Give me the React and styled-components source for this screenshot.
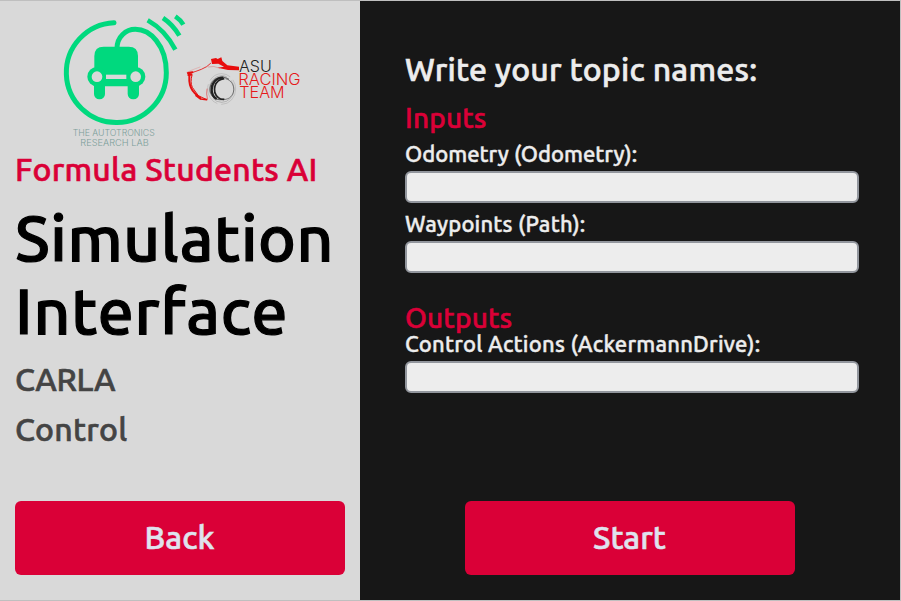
import React from 'react';
import styled, { createGlobalStyle, css } from 'styled-components';

const mediumWeight = css`
  font-weight: 500;
  -webkit-text-stroke: 0.019em currentColor;
`;

const GlobalStyle = createGlobalStyle`
  *, *::before, *::after { box-sizing: border-box; }
  body {
    margin: 0;
    font-family: Ubuntu, 'Noto Sans', sans-serif;
    overflow: hidden;
  }
`;

const Window = styled.div`
  display: grid;
  grid-template-columns: 360px 1fr;
  width: 901px;
  height: 601px;
  border: 1px solid #bfbfbf;
  border-left: 0;
`;

const Sidebar = styled.aside`
  display: flex;
  flex-direction: column;
  padding: 4px 15px 25px;
  background: #d9d9d9;
`;

const Logos = styled.header`
  display: flex;
  align-items: flex-start;
  height: 144px;
  padding-left: 35px;

  svg { display: block; flex: none; }
  svg + svg { margin-top: 40px; }
`;

const Program = styled.p`
  ${mediumWeight}
  margin: 0;
  color: #da0037;
  font-size: 32px;
  line-height: 40px;
  letter-spacing: 0.24px;
  white-space: nowrap;
`;

const Title = styled.h1`
  ${mediumWeight}
  margin: 12px 0 7px;
  color: #000;
  font-size: 64px;
  line-height: 73px;
`;

const TitleLine = styled.span`
  display: block;
  letter-spacing: ${p => p.$spacing}px;
`;

const Mode = styled.p`
  ${mediumWeight}
  margin: 0;
  color: #444;
  font-size: 32px;
  line-height: 50px;
  letter-spacing: ${p => p.$spacing || 0}px;
`;

const Main = styled.main`
  display: flex;
  flex-direction: column;
  padding: 48px 41px 25px 45px;
  background: #171717;
  color: #ededed;
`;

const Heading = styled.h2`
  ${mediumWeight}
  margin: 0 0 16px;
  font-size: 32px;
  line-height: 40px;
  letter-spacing: 0.24px;
`;

const Section = styled.section`
  display: flex;
  flex-direction: column;
  gap: 9px;
  margin-bottom: 32px;
`;

const SectionTitle = styled.h3`
  ${mediumWeight}
  margin: 0 0 ${p => p.$gap}px;
  color: #da0037;
  font-size: 28px;
  line-height: 26px;
  letter-spacing: 0.15px;
`;

const Field = styled.label`
  ${mediumWeight}
  display: flex;
  flex-direction: column;
  gap: 5px;
  font-size: 22px;
  line-height: 24px;
  letter-spacing: ${p => p.$spacing || 0}px;
`;

const Input = styled.input`
  width: 454px;
  height: 32px;
  padding: 0 8px;
  border: 2px solid #92969d;
  border-radius: 6px;
  background: #ededed;
  font: inherit;
  outline: none;
`;

const Button = styled.button`
  width: 330px;
  height: 74px;
  margin: auto 0 0;
  padding: 0 1px 2px 0;
  border: 0;
  border-radius: 6px;
  background: #da0037;
  color: #dfe3ee;
  font: 32px/72px Ubuntu, 'Noto Sans', sans-serif;
  letter-spacing: ${p => p.$spacing || 0}px;
  ${mediumWeight}
`;

const StartButton = styled(Button)`
  margin-left: 60px;
`;

function LabLogo() {
  return (
    <svg width="136" height="144" viewBox="0 0 408 432" fill="none">
      <g stroke="#00d97e" strokeWidth="15">
        <path d="M192 53A150 150 0 1 0 349 203C349 120 300 73 256 73C228 73 201 95 201 130" strokeLinecap="round" />
        <path d="M293 46Q345 75 376 134M339 39Q369 59 388 92M376 34Q391 44 400 59" strokeWidth="14" />
      </g>
      <g fill="#00d97e">
        <path d="M133 195V153Q133 125 161 125H236Q264 125 264 153V195V244H133Z" />
        <circle cx="141" cy="215" r="29" />
        <circle cx="257" cy="215" r="29" />
        <rect x="132" y="225" width="33" height="58" rx="16" />
        <rect x="233" y="225" width="34" height="58" rx="16" />
      </g>
      <g fill="#d9d9d9">
        <circle cx="141" cy="215" r="16" />
        <circle cx="257" cy="215" r="16" />
        <rect x="168" y="209" width="61" height="13" />
      </g>
      <g fill="#7c9e99" fontFamily="Inter, sans-serif" fontWeight="300" fontSize="26">
        <text x="68" y="394" textLength="246" lengthAdjust="spacingAndGlyphs">THE AUTOTRONICS</text>
        <text x="91" y="424" textLength="205" lengthAdjust="spacingAndGlyphs">RESEARCH LAB</text>
      </g>
    </svg>
  );
}

function RacingLogo() {
  return (
    <svg width="124" height="70" viewBox="18 0 372 210" fill="none">
      <g stroke="#e60f0f" strokeLinecap="round" strokeLinejoin="round">
        <path d="M92 55Q82 66 64 73T35 83L28 92" strokeWidth="2.5" />
        <path d="M20 82Q42 72 60 66" strokeWidth="1" opacity=".5" />
        <path d="M24 84L37 82M25 90L34 89M28 86V108Q30 130 43 143L61 160" strokeWidth="6" />
        <path d="M36 90Q30 112 37 127L55 152L78 163" strokeWidth="3" />
        <path d="M48 152L62 162L80 164" strokeWidth="5" />
        <path d="M81 132Q78 146 82 161" strokeWidth="1.5" />
      </g>
      <path d="M93 42L108 39L113 42L124 37L127 48L142 61L177 65V76L144 75L113 68L132 65L115 56L96 57Z" fill="#e80d0d" />
      <path d="M84 66Q101 61 120 70" stroke="#d83a3a" strokeWidth="1" />
      <g stroke="#222">
        <ellipse cx="125" cy="132" rx="42" ry="46" strokeWidth="1.2" opacity=".35" strokeDasharray="70 12" />
        <ellipse cx="125" cy="132" rx="37" ry="40" strokeWidth="1.5" opacity=".4" strokeDasharray="90 16" />
        <path d="M147 103C121 86 90 103 90 134C91 156 110 170 134 162" strokeWidth="2" />
        <path d="M130 98C108 98 95 114 95 134C95 147 102 157 110 162" strokeWidth="7" />
        <path d="M133 101C103 104 94 139 115 158Q122 164 132 163" strokeWidth="5" />
        <path d="M136 101C166 108 170 148 144 161Q135 165 126 163" strokeWidth="1.5" />
      </g>
      <g fontFamily="Inter, sans-serif" fontWeight="300" fontSize="46">
        <text x="177" y="80" fill="#222" textLength="98" lengthAdjust="spacingAndGlyphs">ASU</text>
        <text x="175" y="121" fill="#e51a1a" textLength="187" lengthAdjust="spacingAndGlyphs">RACING</text>
        <text x="178" y="160" fill="#e51a1a" textLength="136" lengthAdjust="spacingAndGlyphs">TEAM</text>
      </g>
    </svg>
  );
}

export default function App() {
  return (
    <>
      <GlobalStyle />
      <Window>
        <Sidebar>
          <Logos>
            <LabLogo />
            <RacingLogo />
          </Logos>
          <Program>Formula Students AI</Program>
          <Title>
            <TitleLine $spacing={0.6}>Simulation</TitleLine>
            <TitleLine $spacing={0.8}>Interface</TitleLine>
          </Title>
          <Mode $spacing={-0.4}>CARLA</Mode>
          <Mode $spacing={0.25}>Control</Mode>
          <Button $spacing={0.1}>Back</Button>
        </Sidebar>
        <Main>
          <Heading>Write your topic names:</Heading>
          <Section>
            <SectionTitle $gap={2}>Inputs</SectionTitle>
            <Field>
              Odometry (Odometry):
              <Input />
            </Field>
            <Field $spacing={0.2}>
              Waypoints (Path):
              <Input />
            </Field>
          </Section>
          <Section>
            <SectionTitle $gap={-8}>Outputs</SectionTitle>
            <Field $spacing={0.22}>
              Control Actions (AckermannDrive):
              <Input />
            </Field>
          </Section>
          <StartButton>Start</StartButton>
        </Main>
      </Window>
    </>
  );
}
